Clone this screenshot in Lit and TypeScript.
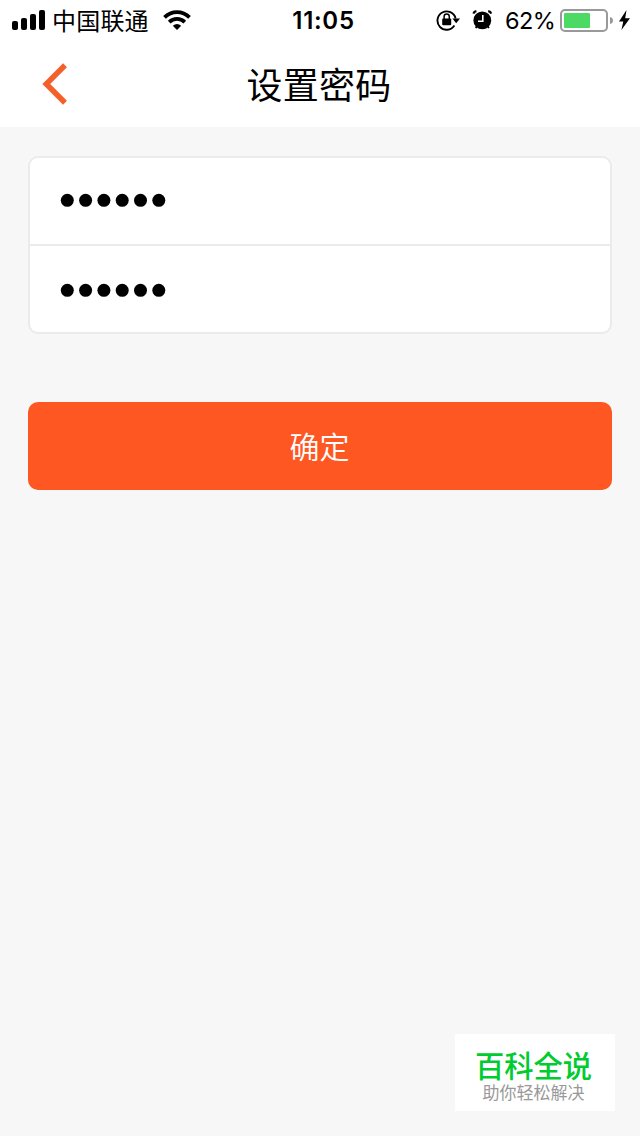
import { LitElement, html, css, svg } from "lit";
import { customElement, property } from "lit/decorators.js";

@customElement("status-bar")
class StatusBar extends LitElement {
  static styles = css`
    :host {
      display: grid;
      grid-template-columns: 280px 87px 273px;
      grid-template-rows: 40px;
      height: 40px;
      color: #000;
      font: 24px/40px "Inter", "Noto Sans CJK SC", sans-serif;
      white-space: nowrap;
    }
    .left { display: flex; align-items: center; padding-left: 12px; }
    .carrier { margin: 0 14px 0 7px; width: 97px; height: 40px; line-height: 39px; letter-spacing: 0.2px; font-family: "Noto Sans CJK SC", sans-serif; }
    .time { text-align: center; font-weight: 600; font-size: 24px; line-height: 42px; letter-spacing: 0.7px; }
    .right { display: flex; align-items: center; padding-left: 69px; }
    .percent { width: 50px; height: 40px; margin: 0 5px 0 12px; line-height: 42px; font-size: 23.5px; letter-spacing: -0.6px; }
    svg { display: block; flex: none; }
    .alarm { margin-left: 11px; }
    .bolt { margin-left: 4px; }
  `;
  render() {
    return html`
      <div class="left">
        <svg width="33" height="40" viewBox="0 0 33 40">
          <rect x="0" y="21" width="6" height="9" rx="2" />
          <rect x="9" y="18" width="6" height="12" rx="2" />
          <rect x="18" y="14" width="6" height="16" rx="2" />
          <rect x="27" y="10" width="6" height="20" rx="2" />
        </svg>
        <span class="carrier">中国联通</span>
        <svg width="28" height="40" viewBox="0 0 28 40" fill="none" stroke="#000" stroke-width="3.8">
          <path d="M1.5 17.3C8.5 10.3 19.5 10.3 26.5 17.3" />
          <path d="M6.2 22.1C10.6 17.9 17.4 17.9 21.8 22.1" />
          <path d="M14 30L9.8 25.8Q14 22.2 18.2 25.8Z" fill="#000" stroke="none" />
        </svg>
      </div>
      <div class="time">11:05</div>
      <div class="right">
        <svg width="24" height="40" viewBox="0 0 24 40">
          <path d="M18.4 25.6A9.2 9.2 0 1 1 19.6 18.4" fill="none" stroke="#000" stroke-width="1.9" />
          <path d="M16.4 18.4H24L20.2 23.2Z" />
          <rect x="6.2" y="18.4" width="9" height="6.8" rx="1" />
          <path d="M8.1 19V16.6a2.6 2.6 0 0 1 5.2 0V19" fill="none" stroke="#000" stroke-width="1.5" />
        </svg>
        <svg class="alarm" width="22" height="40" viewBox="0 0 22 40">
          <circle cx="11.3" cy="20.4" r="8.9" />
          <path d="M2.4 13.6Q3 11.7 5.4 11.2M20.2 13.6Q19.6 11.7 17.2 11.2" fill="none" stroke="#000" stroke-width="2.2" />
          <path d="M5.6 26.4L4.8 28.2M17 26.4L17.8 28.2" stroke="#000" stroke-width="1.8" />
          <path d="M11.8 15V21.2H7" fill="none" stroke="#fff" stroke-width="1.6" />
        </svg>
        <span class="percent">62%</span>
        <svg width="54" height="40" viewBox="0 0 54 40">
          <rect x="1" y="10" width="46" height="21" rx="4" fill="#fff" stroke="#999" stroke-width="2" />
          <rect x="4" y="13" width="26" height="15" rx="1" fill="#4cd964" />
          <path d="M50 17q3 .8 3 3.5t-3 3.5z" fill="#999" />
        </svg>
        <svg class="bolt" width="13" height="40" viewBox="0 0 13 40">
          <path d="M8.5 10L1 21.5H5.3L3.4 30L12 18.2H7.2Z" />
        </svg>
      </div>
    `;
  }
}

@customElement("password-row")
class PasswordRow extends LitElement {
  @property({ type: Number }) length = 6;
  static styles = css`
    :host { display: flex; align-items: center; padding-left: 30px; }
    svg { display: block; }
  `;
  render() {
    return html`<svg width="112" height="14" viewBox="0 0 112 14">
      ${Array.from({ length: this.length }, (_, i) => svg`<circle cx=${7.3 + i * 18.3} cy="7.3" r="6.5" />`)}
    </svg>`;
  }
}

@customElement("app-root")
class AppRoot extends LitElement {
  static styles = css`
    :host {
      display: flex;
      flex-direction: column;
      box-sizing: border-box;
      height: 1136px;
      background: #f7f7f7;
      font-family: "Noto Sans CJK SC", sans-serif;
    }
    status-bar { background: #fff; }
    .nav {
      display: grid;
      grid-template-columns: 80px 478px 82px;
      align-items: start;
      box-sizing: border-box;
      height: 87px;
      background: #fff;
    }
    .back { display: block; margin: 22px 0 0 40px; }
    .title { margin: 1px 0 0; text-align: center; font-size: 36px; line-height: 84px; font-weight: 400; color: #000; letter-spacing: 0.2px; }
    .card {
      box-sizing: border-box;
      height: 178px;
      margin: 29px 28px 0;
      border: 2px solid #ebebeb;
      border-radius: 10px;
      background: #fff;
    }
    .row { box-sizing: border-box; height: 86px; padding-bottom: 2px; }
    .row + .row { height: 88px; padding-bottom: 0; padding-top: 2px; border-top: 2px solid #ebebeb; }
    .submit {
      display: block;
      box-sizing: border-box;
      height: 88px;
      margin: 68px 28px 0;
      padding: 0 1px 2px 0;
      border: 0;
      border-radius: 10px;
      background: #ff5722;
      color: #fff;
      font: 350 30px/86px "Noto Sans CJK SC", sans-serif;
    }
    .brand {
      box-sizing: border-box;
      width: 160px;
      height: 77px;
      margin: auto 25px 25px auto;
      padding: 14px 3px 0 0;
      background: #fff;
      text-align: center;
      white-space: nowrap;
      font-family: "Liberation Sans", "Noto Sans CJK SC", sans-serif;
    }
    .name { font-size: 29.3px; line-height: 38px; font-weight: 500; color: #00cb2f; }
    .tag { font-size: 17px; line-height: 16px; color: #999; }
  `;
  render() {
    return html`
      <status-bar></status-bar>
      <header class="nav">
        <svg class="back" width="30" height="44" viewBox="0 0 30 44">
          <path d="M25 3.3L6.3 22L25 40.7" fill="none" stroke="#f4602a" stroke-width="5.5" />
        </svg>
        <h1 class="title">设置密码</h1>
      </header>
      <div class="card">
        <password-row class="row"></password-row>
        <password-row class="row"></password-row>
      </div>
      <button class="submit">确定</button>
      <aside class="brand">
        <div class="name">百科全说</div>
        <div class="tag">助你轻松解决</div>
      </aside>
    `;
  }
}
